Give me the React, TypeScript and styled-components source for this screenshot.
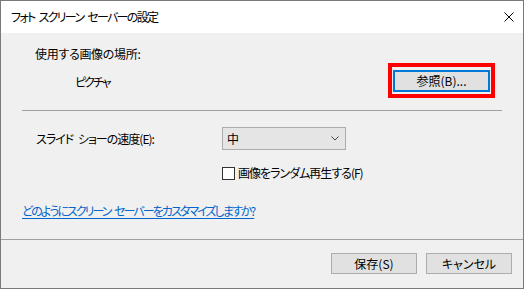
import React from 'react';
import styled, { createGlobalStyle } from 'styled-components';

const Global = createGlobalStyle`
  html, body { margin: 0; padding: 0; background: #ffffff; }
  body {
    font-family: "Noto Sans CJK JP", "Noto Sans", sans-serif;
    font-size: 12px;
    color: #000;
    font-feature-settings: "palt";
  }
  * { box-sizing: border-box; }
`;

const Window = styled.div`
  width: 524px;
  height: 289px;
  border: 1px solid #7a7a7a;
  background: #f0f0f0;
  display: flex;
  flex-direction: column;
`;

const TitleBar = styled.div`
  height: 32px;
  background: #ffffff;
  display: flex;
  align-items: center;
  justify-content: space-between;
  padding: 0 9px 0 10px;
  line-height: 16px;
`;

const Title = styled.span`
  letter-spacing: -1.7px;
  word-spacing: 3px;
  white-space: pre;
`;

const CloseIcon = styled.svg`
  width: 10px;
  height: 10px;
  display: block;
`;

const Content = styled.div`
  flex: 1;
  padding: 0 21px;
  display: flex;
  flex-direction: column;
`;

const LocationRow = styled.div`
  display: flex;
  justify-content: space-between;
  align-items: flex-start;
  padding-top: 13px;
`;

const LocationText = styled.div`
  display: flex;
  flex-direction: column;
  gap: 12px;
  padding-left: 13px;
`;

const Label = styled.div<{ $indent?: number; $track?: number }>`
  line-height: 16px;
  white-space: pre;
  word-spacing: 3px;
  padding-left: ${p => p.$indent ?? 0}px;
  letter-spacing: ${p => p.$track ?? 0}px;
`;

const Highlight = styled.div`
  margin-top: 17px;
  margin-right: 7px;
  border: 4px solid #ff0000;
  padding: 3px 1px 2px;
`;

const Button = styled.button<{ $focused?: boolean; $w: number; $h: number }>`
  width: ${p => p.$w}px;
  height: ${p => p.$h}px;
  background: #e1e1e1;
  border: ${p => (p.$focused ? '2px solid #0078d7' : '1px solid #adadad')};
  font: inherit;
  font-size: 12px;
  color: #000;
  padding: 0;
  display: flex;
  align-items: center;
  justify-content: center;
  line-height: 16px;
  white-space: nowrap;
`;

const Separator = styled.div`
  height: 1px;
  background: #a0a0a0;
  margin-top: 12px;
`;

const FieldRow = styled.div<{ $top: number }>`
  display: grid;
  grid-template-columns: 200px auto;
  align-items: center;
  margin-top: ${p => p.$top}px;
`;

const Select = styled.div`
  width: 124px;
  height: 23px;
  background: #e5e5e5;
  border: 1px solid #acacac;
  display: flex;
  align-items: center;
  justify-content: space-between;
  padding: 0 6px 0 4px;
  line-height: 16px;
`;

const Chevron = styled.svg`
  width: 8px;
  height: 5px;
  display: block;
`;

const CheckLine = styled.label`
  grid-column: 2;
  display: flex;
  align-items: center;
  gap: 3px;
  line-height: 16px;
`;

const CheckText = styled.span`
  letter-spacing: -1px;
  white-space: nowrap;
`;

const Box = styled.span`
  width: 13px;
  height: 13px;
  border: 1px solid #333333;
  background: #ffffff;
  display: block;
`;

const Link = styled.a`
  margin-top: 22px;
  color: #0066cc;
  text-decoration: underline;
  text-underline-offset: 2px;
  line-height: 16px;
  white-space: pre;
  letter-spacing: -1.95px;
  word-spacing: 3px;
  align-self: flex-start;
`;

const Footer = styled.div`
  height: 49px;
  border-top: 1px solid #a0a0a0;
  display: flex;
  justify-content: flex-end;
  align-items: flex-start;
  gap: 9px;
  padding: 13px 11px 0 0;
`;

export default function App() {
  return (
    <>
      <Global />
      <Window>
        <TitleBar>
          <Title>フォト スクリーン セーバーの設定</Title>
          <CloseIcon viewBox="0 0 10 10">
            <path d="M0.5 0.5 L9.5 9.5 M9.5 0.5 L0.5 9.5" stroke="#000" strokeWidth="1" fill="none" />
          </CloseIcon>
        </TitleBar>
        <Content>
          <LocationRow>
            <LocationText>
              <Label $track={-0.3}>使用する画像の場所:</Label>
              <Label $indent={40} $track={-2}>ピクチャ</Label>
            </LocationText>
            <Highlight>
              <Button $focused $w={97} $h={22}>参照(B)...</Button>
            </Highlight>
          </LocationRow>
          <Separator />
          <FieldRow $top={16}>
            <Label $indent={14} $track={-1}>スライド ショーの速度(E):</Label>
            <Select>
              <span>中</span>
              <Chevron viewBox="0 0 8 5">
                <path d="M0.5 0.5 L4 4 L7.5 0.5" stroke="#444" strokeWidth="1" fill="none" />
              </Chevron>
            </Select>
          </FieldRow>
          <FieldRow $top={15}>
            <CheckLine>
              <Box />
              <CheckText>画像をランダム再生する(F)</CheckText>
            </CheckLine>
          </FieldRow>
          <Link href="#">どのようにスクリーン セーバーをカスタマイズしますか?</Link>
        </Content>
        <Footer>
          <Button $w={86} $h={21}>保存(S)</Button>
          <Button $w={86} $h={21}>キャンセル</Button>
        </Footer>
      </Window>
    </>
  );
}
